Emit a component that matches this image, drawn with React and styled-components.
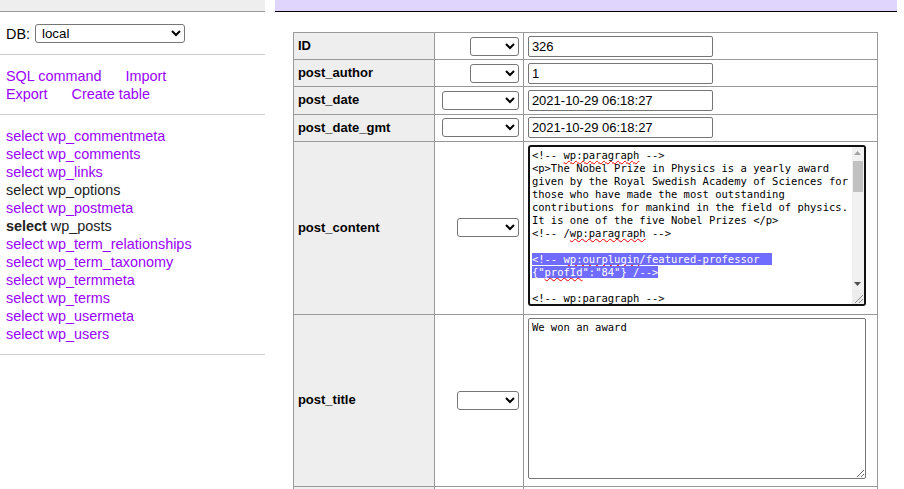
import React from 'react'
import styled, { createGlobalStyle } from 'styled-components'

const GlobalStyle = createGlobalStyle`
  html, body { margin: 0; padding: 0; overflow: hidden; background: #fff; }
  body {
    font-family: "Liberation Sans", Arial, sans-serif;
    font-size: 14.4px;
    line-height: 1.25;
    color: #000;
  }
`

const tables = [
  'wp_commentmeta', 'wp_comments', 'wp_links', 'wp_options', 'wp_postmeta', 'wp_posts',
  'wp_term_relationships', 'wp_term_taxonomy', 'wp_termmeta', 'wp_terms', 'wp_usermeta', 'wp_users',
]

function App() {
  return (
    <>
      <GlobalStyle />
      <Page>
        <Menu>
          <MenuHead />
          <DbRow>
            <span>DB:</span>
            <DbSelect defaultValue="local">
              <option>local</option>
            </DbSelect>
          </DbRow>
          <Section>
            <LinkRow>
              <Link href="#">SQL command</Link>
              <Link href="#">Import</Link>
            </LinkRow>
            <LinkRow>
              <Link href="#">Export</Link>
              <Link href="#">Create table</Link>
            </LinkRow>
          </Section>
          <Section>
            {tables.map(t => (
              <ListItem key={t} $dark={t === 'wp_options' || t === 'wp_posts'}>
                {t === 'wp_posts' ? <b>select</b> : 'select'} {t}
              </ListItem>
            ))}
          </Section>
        </Menu>

        <Content>
          <Bar />
          <EditTable>
            <colgroup>
              <col style={{ width: 141 }} />
              <col style={{ width: 89 }} />
              <col style={{ width: 354 }} />
            </colgroup>
            <tbody>
              <FieldRow name="ID" selW={49} value="326" />
              <FieldRow name="post_author" selW={49} value="1" />
              <FieldRow name="post_date" selW={77} value="2021-10-29 06:18:27" />
              <FieldRow name="post_date_gmt" selW={77} value="2021-10-29 06:18:27" />
              <tr>
                <Th>post_content</Th>
                <FnCell><FnSelect $w={62}><option></option></FnSelect></FnCell>
                <ValCell>
                  <CodeBox>
                    <CodeText>
                      {'<!-- '}<Sq>wp:paragraph</Sq>{' -->\n'}
                      {'<p>The Nobel Prize in Physics is a yearly award\n'}
                      {'given by the Royal Swedish Academy of Sciences for\n'}
                      {'those who have made the most outstanding\n'}
                      {'contributions for mankind in the field of physics.\n'}
                      {'It is one of the five Nobel Prizes </p>\n'}
                      {'<!-- /'}<Sq>wp:paragraph</Sq>{' -->\n'}
                      {'\n'}
                      <Sel $pad>{'<!-- '}<Sq>wp:ourplugin</Sq>{'/featured-professor '}</Sel>{'\n'}
                      <Sel>{'{"'}<Sq>profId</Sq>{'":"84"} /-->'}</Sel>{'\n'}
                      {'\n'}
                      {'<!-- '}<Sq>wp:paragraph</Sq>{' -->'}
                    </CodeText>
                    <ScrollBar>
                      <ScrollBtn>
                        <svg width="7" height="4" viewBox="0 0 7 4"><path d="M0 4 L3.5 0 L7 4 Z" fill="#a3a3a3" /></svg>
                      </ScrollBtn>
                      <Track><Thumb /></Track>
                      <ScrollBtn>
                        <svg width="7" height="4" viewBox="0 0 7 4"><path d="M0 0 L3.5 4 L7 0 Z" fill="#505050" /></svg>
                      </ScrollBtn>
                      <Corner>
                        <svg width="12" height="12" viewBox="0 0 12 12">
                          <path d="M3 11 L11 3 M7 11 L11 7" stroke="#8a8a8a" strokeWidth="1" />
                        </svg>
                      </Corner>
                    </ScrollBar>
                  </CodeBox>
                </ValCell>
              </tr>
              <tr>
                <Th>post_title</Th>
                <FnCell><FnSelect $w={62}><option></option></FnSelect></FnCell>
                <ValCell>
                  <TextArea readOnly spellCheck={false} defaultValue="We won an award" />
                </ValCell>
              </tr>
              <tr>
                <Th></Th>
                <FnCell><FnSelect $w={62}><option></option></FnSelect></FnCell>
                <ValCell>
                  <TextArea readOnly spellCheck={false} defaultValue="" />
                </ValCell>
              </tr>
            </tbody>
          </EditTable>
        </Content>
      </Page>
    </>
  )
}

function FieldRow({ name, selW, value }) {
  return (
    <tr>
      <Th>{name}</Th>
      <FnCell><FnSelect $w={selW}><option></option></FnSelect></FnCell>
      <ValCell><Input readOnly defaultValue={value} /></ValCell>
    </tr>
  )
}

export default App

const Page = styled.div`
  display: flex;
  align-items: flex-start;
  width: 904px;
`

const Menu = styled.div`
  width: 265px;
  flex: none;
`

const MenuHead = styled.div`
  height: 11px;
  background: #eee;
  border-bottom: 1px solid #999;
`

const DbRow = styled.div`
  display: flex;
  align-items: center;
  gap: 5px;
  padding: 12px 6px 11px;
  border-bottom: 1px solid #ccc;
`

const DbSelect = styled.select`
  width: 150px;
  height: 19px;
  font-family: "Liberation Sans", Arial, sans-serif;
  font-size: 13.33px;
  border: 1px solid #767676;
  border-radius: 3px;
  background: #fff;
  padding: 0 0 0 2px;
  color: #000;
`

const Section = styled.div`
  padding: 12px 6px 11px;
  border-bottom: 1px solid #ccc;
`

const LinkRow = styled.div`
  display: flex;
  gap: 24px;
  height: 18px;
`

const Link = styled.a`
  color: #90f;
  text-decoration: none;
`

const ListItem = styled.div`
  height: 18px;
  color: ${p => (p.$dark ? '#222' : '#90f')};
  white-space: nowrap;
`

const Content = styled.div`
  flex: 1;
  margin: 0 7px 0 10px;
`

const Bar = styled.div`
  height: 11px;
  background: #e0d6fd;
  border-bottom: 1px solid #000;
`

const EditTable = styled.table`
  margin: 20px 0 0 18px;
  width: 584px;
  table-layout: fixed;
  border-collapse: collapse;
  border-top: 1px solid #999;
  border-left: 1px solid #999;
  font-size: 13px;
`

const Th = styled.th`
  background: #eee;
  text-align: left;
  font-weight: bold;
  vertical-align: middle;
  padding: 2.6px 3.9px;
  border-right: 1px solid #999;
  border-bottom: 1px solid #999;
  white-space: nowrap;
`

const FnCell = styled.td`
  text-align: right;
  vertical-align: middle;
  padding: 2.6px 3.9px;
  border-right: 1px solid #999;
  border-bottom: 1px solid #999;
`

const ValCell = styled.td`
  vertical-align: middle;
  padding: 2.6px 3.9px;
  border-right: 1px solid #999;
  border-bottom: 1px solid #999;
`

const FnSelect = styled.select`
  width: ${p => p.$w}px;
  height: 19px;
  vertical-align: middle;
  border: 1px solid #767676;
  border-radius: 3px;
  background: #fff;
  font-size: 13px;
`

const Input = styled.input`
  display: block;
  box-sizing: border-box;
  width: 185px;
  height: 21px;
  margin: 0;
  padding: 1px 3px;
  border: 1px solid #767676;
  border-radius: 2px;
  font-family: "Liberation Sans", Arial, sans-serif;
  font-size: 13px;
  color: #000;
  outline: none;
`

const CodeBox = styled.div`
  display: flex;
  box-sizing: border-box;
  width: 338px;
  height: 161px;
  margin: 1px 0 5px;
  border: 2px solid #111;
  border-radius: 3px;
  background: #fff;
  overflow: hidden;
`

const CodeText = styled.div`
  flex: 1;
  padding: 2px 0 0 2px;
  font-family: "DejaVu Sans Mono", monospace;
  font-size: 10.5px;
  line-height: 13px;
  white-space: pre;
  overflow: hidden;
  color: #000;
`

const Sq = styled.span`
  text-decoration: underline wavy #e00;
  text-decoration-thickness: 1px;
  text-decoration-skip-ink: none;
  text-underline-offset: 1px;
`

const Sel = styled.span`
  background: #6f6cff;
  color: #fff;
  padding-right: ${p => (p.$pad ? '6px' : '0')};
`

const ScrollBar = styled.div`
  width: 12px;
  flex: none;
  display: flex;
  flex-direction: column;
  background: #f1f1f1;
`

const ScrollBtn = styled.div`
  height: 12px;
  display: flex;
  align-items: center;
  justify-content: center;
`

const Track = styled.div`
  flex: 1;
`

const Thumb = styled.div`
  margin: 2px 1px 0;
  height: 31px;
  background: #c1c1c1;
`

const Corner = styled.div`
  height: 14px;
  display: flex;
  align-items: flex-end;
  background: #ececec;
`

const TextArea = styled.textarea`
  display: block;
  box-sizing: border-box;
  width: 338px;
  height: 161px;
  margin: 0 0 5px;
  padding: 2px 3px;
  border: 1px solid #767676;
  border-radius: 2px;
  font-family: "DejaVu Sans Mono", monospace;
  font-size: 10.5px;
  line-height: 13px;
  color: #000;
  outline: none;
`
